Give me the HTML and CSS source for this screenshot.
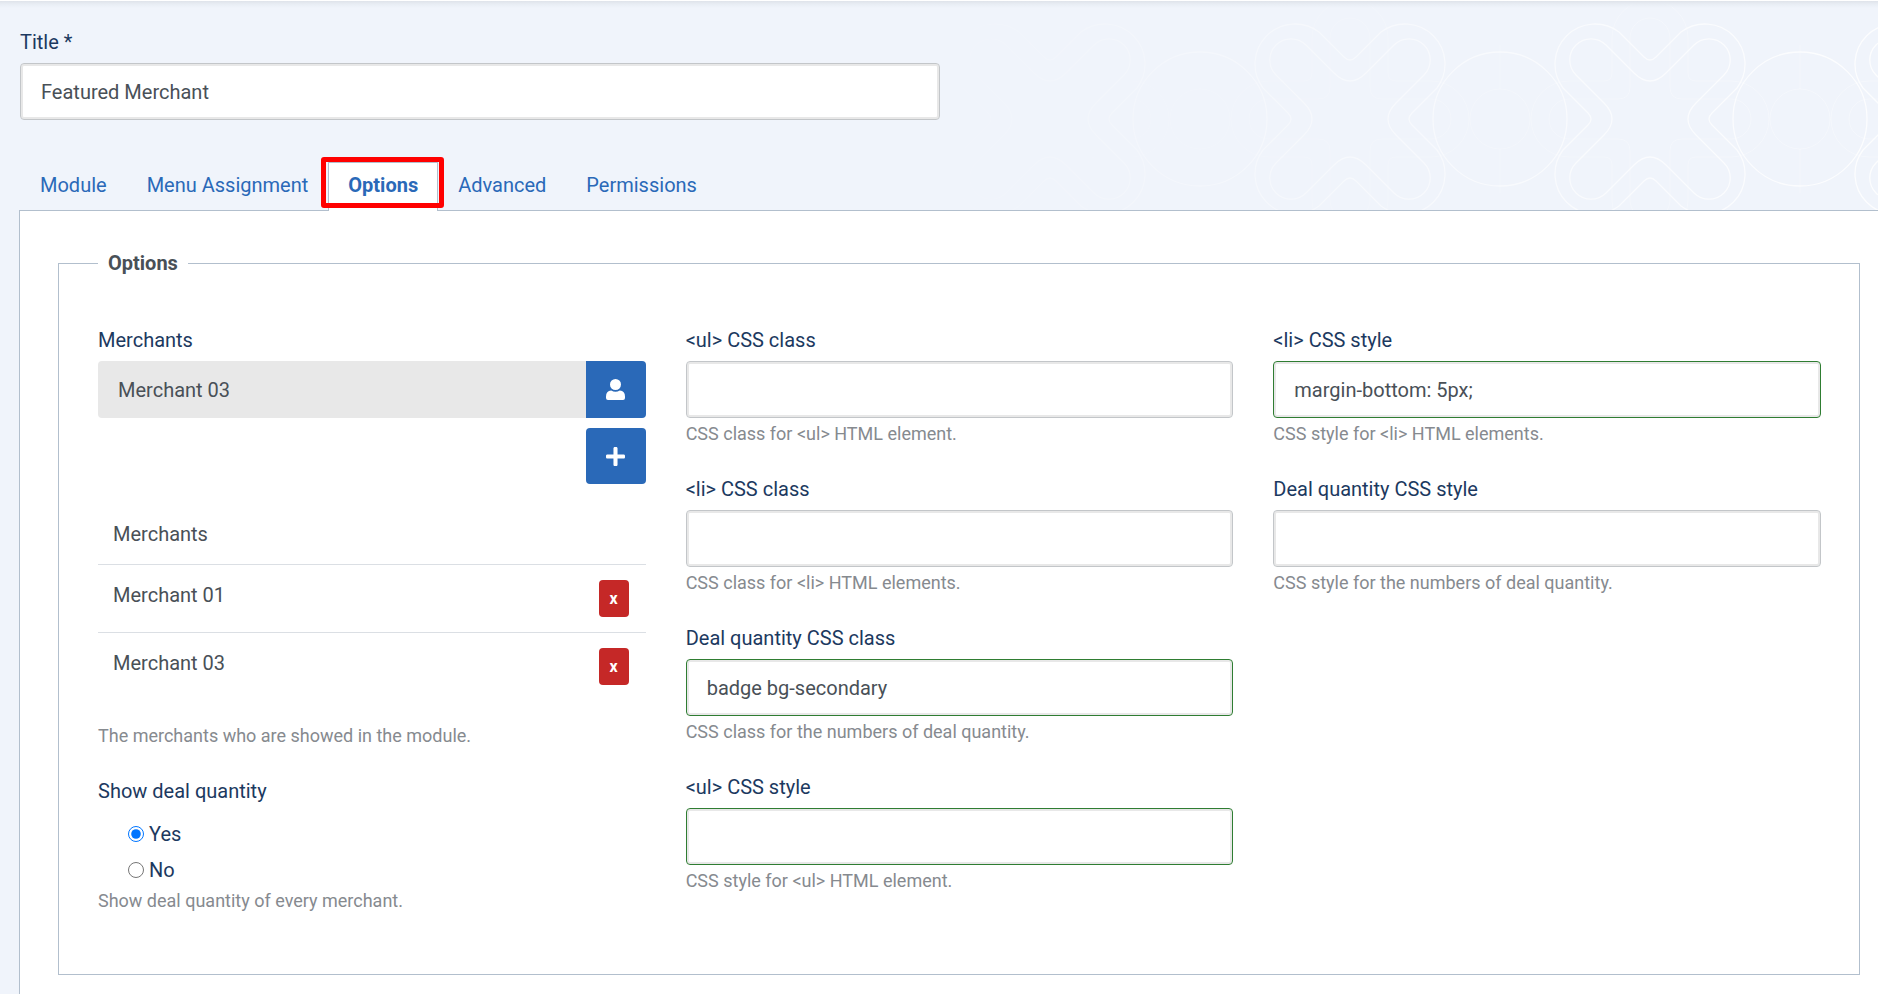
FILE: index.html
```html
<!DOCTYPE html>
<html lang="en">
<head>
<meta charset="utf-8">
<title>Featured Merchant</title>
<link rel="stylesheet" href="styles.css">
</head>
<body>
<svg class="backdrop" aria-hidden="true">
  <defs>
    <linearGradient id="fade" x1="0" x2="1" y1="0" y2="0">
      <stop offset="0" stop-color="#000"/>
      <stop offset=".5" stop-color="#777"/>
      <stop offset="1" stop-color="#ccc"/>
    </linearGradient>
    <mask id="fade-mask"><rect width="100%" height="100%" fill="url(#fade)"/></mask>
    <g id="tile" fill="none" stroke="#fff">
      <g stroke-width="1.3">
        <path d="M-31-87L-6-62Q0-56 6-62L31-87A40 40 0 0 1 87-31L62-6Q56 0 62 6L87 31A40 40 0 0 1 31 87L6 62Q0 56-6 62L-31 87A40 40 0 0 1-87 31L-62 6Q-56 0-62-6L-87-31A40 40 0 0 1-31-87Z"/>
        <path d="M-44-74L-16-46Q0-30 16-46L44-74A21 21 0 0 1 74-44L46-16Q30 0 46 16L74 44A21 21 0 0 1 44 74L16 46Q0 30-16 46L-44 74A21 21 0 0 1-74 44L-46 16Q-30 0-46-16L-74-44A21 21 0 0 1-44-74Z"/>
        <circle cx="150" r="67"/>
      </g>
      <g stroke-opacity=".4">
        <path d="M-38-81A38 38 0 0 1 38-81V-46Q38-38 46-38H81A38 38 0 0 1 81 38H46Q38 38 38 46V81A38 38 0 0 1-38 81V46Q-38 38-46 38H-81A38 38 0 0 1-81-38H-46Q-38-38-38-46Z"/>
        <path d="M-20-81A20 20 0 0 1 20-81V-32Q20-20 32-20H81A20 20 0 0 1 81 20H32Q20 20 20 32V81A20 20 0 0 1-20 81V32Q-20 20-32 20H-81A20 20 0 0 1-81-20H-32Q-20-20-20-32Z"/>
        <circle cx="150" r="30"/>
        <path d="M150-74V-30M150 30V74"/>
      </g>
    </g>
  </defs>
  <g mask="url(#fade-mask)">
    <rect width="100%" height="100%" fill="none"/>
    <use href="#tile" x="150" y="119"/>
    <use href="#tile" x="450" y="119"/>
    <use href="#tile" x="750" y="119"/>
    <use href="#tile" x="1050" y="119"/>
  </g>
</svg>
<form class="page">
  <div class="title-row">
    <label class="label" for="title">Title *</label>
    <input class="input" id="title" type="text" value="Featured Merchant">
  </div>

  <nav class="tabs">
    <a class="tab" href="#module">Module</a>
    <a class="tab" href="#assignment">Menu Assignment</a>
    <a class="tab tab-active" href="#options">Options</a>
    <a class="tab" href="#advanced">Advanced</a>
    <a class="tab" href="#permissions">Permissions</a>
  </nav>

  <section class="panel" id="options">
    <fieldset class="options">
      <legend class="legend">Options</legend>
      <div class="columns">
        <div class="column">
          <div class="field">
            <label class="label" for="merchant">Merchants</label>
            <div class="picker">
              <input class="picker-input" id="merchant" type="text" value="Merchant 03" readonly>
              <button class="button button-joined" type="button" aria-label="Select merchant">
                <svg class="icon icon-user" viewBox="0 0 19 21"><circle cx="9.500" cy="5.500" r="5.500"/><path d="M5.200 11.600Q9.500 14 13.800 11.600Q19 12 19 17.500V19Q19 21 17 21H2Q0 21 0 19V17.500Q0 12 5.200 11.600Z"/></svg>
              </button>
            </div>
            <div class="add-row">
              <button class="button" type="button" aria-label="Add merchant">
                <svg class="icon icon-plus" viewBox="0 0 448 448"><path d="M416 176H272V32c0-17.700-14.300-32-32-32h-32c-17.700 0-32 14.300-32 32v144H32c-17.700 0-32 14.300-32 32v32c0 17.700 14.300 32 32 32h144v144c0 17.700 14.300 32 32 32h32c17.700 0 32-14.300 32-32V272h144c17.700 0 32-14.300 32-32v-32c0-17.700-14.300-32-32-32z"/></svg>
              </button>
            </div>
            <table class="merchants">
              <thead><tr><th colspan="2">Merchants</th></tr></thead>
              <tbody>
                <tr><td>Merchant 01</td><td class="action"><button class="remove" type="button">x</button></td></tr>
                <tr><td>Merchant 03</td><td class="action"><button class="remove" type="button">x</button></td></tr>
              </tbody>
            </table>
            <p class="help">The merchants who are showed in the module.</p>
          </div>
          <div class="field" role="radiogroup" aria-labelledby="show-label">
            <span class="label" id="show-label">Show deal quantity</span>
            <div class="radios">
              <label class="radio"><input type="radio" name="show" checked>Yes</label>
              <label class="radio"><input type="radio" name="show">No</label>
            </div>
            <p class="help">Show deal quantity of every merchant.</p>
          </div>
        </div>

        <div class="column">
          <div class="field">
            <label class="label" for="ul-class">&lt;ul&gt; CSS class</label>
            <input class="input" id="ul-class" type="text">
            <p class="help">CSS class for &lt;ul&gt; HTML element.</p>
          </div>
          <div class="field">
            <label class="label" for="li-class">&lt;li&gt; CSS class</label>
            <input class="input" id="li-class" type="text">
            <p class="help">CSS class for &lt;li&gt; HTML elements.</p>
          </div>
          <div class="field">
            <label class="label" for="deal-class">Deal quantity CSS class</label>
            <input class="input input-valid" id="deal-class" type="text" value="badge bg-secondary">
            <p class="help">CSS class for the numbers of deal quantity.</p>
          </div>
          <div class="field">
            <label class="label" for="ul-style">&lt;ul&gt; CSS style</label>
            <input class="input input-valid" id="ul-style" type="text">
            <p class="help">CSS style for &lt;ul&gt; HTML element.</p>
          </div>
        </div>

        <div class="column">
          <div class="field">
            <label class="label" for="li-style">&lt;li&gt; CSS style</label>
            <input class="input input-valid" id="li-style" type="text" value="margin-bottom: 5px;">
            <p class="help">CSS style for &lt;li&gt; HTML elements.</p>
          </div>
          <div class="field">
            <label class="label" for="deal-style">Deal quantity CSS style</label>
            <input class="input" id="deal-style" type="text">
            <p class="help">CSS style for the numbers of deal quantity.</p>
          </div>
        </div>
      </div>
    </fieldset>
  </section>
</form>
</body>
</html>
```
FILE: styles.css
```css
* {
  box-sizing: border-box;
}

body {
  margin: 0;
  min-height: 100vh;
  overflow: hidden;
  background: #f0f4fb;
  border-top: 1px solid #fff;
  color: #495057;
  font-family: Roboto, "Liberation Sans", sans-serif;
  font-size: 20px;
  line-height: 30px;
}

input,
button {
  font: inherit;
  color: inherit;
}

/* Decorative line pattern behind the header area */
.backdrop {
  position: absolute;
  top: 0;
  right: 0;
  width: 978px;
  height: 210px;
}

.page {
  position: relative;
  display: flex;
  flex-direction: column;
  min-height: calc(100vh - 1px);
  padding: 26px 0 0 19px;
  background: linear-gradient(#dfe3ea, #e8edf4 3px, transparent 7px);
}

.title-row {
  width: 50%;
  padding: 0 9px 0 1px;
  margin-bottom: 42px;
}

.label {
  display: block;
  margin-bottom: 6px;
  color: #1c3960;
}

.input {
  display: block;
  width: 100%;
  height: 57px;
  padding: 0 20px;
  border: 1px solid #c3c6c9;
  border-radius: 4px;
  background: #fff;
  box-shadow: inset 0 0 0 2px #e8e8e8;
}

.input-valid {
  border-color: #2f7d32;
}

.help {
  margin: 3px 0 0;
  color: #868a8f;
  font-size: 18px;
  line-height: 26px;
}

.tabs {
  display: flex;
  padding-left: 1px;
}

.tab {
  padding: 7px 19px 10px;
  border: 1px solid transparent;
  border-bottom: 0;
  color: #2a69b8;
  text-decoration: none;
}

.tab-active {
  position: relative;
  margin-bottom: -1px;
  padding-bottom: 11px;
  background: #fff;
  border-color: #b2bfcd;
  font-weight: 700;
}

/* Red callout around the current tab */
.tab-active::after {
  content: "";
  position: absolute;
  inset: -6px -7px 3px -8px;
  border: 5px solid #f00;
  border-radius: 3px;
}

.panel {
  flex: 1;
  padding: 37px 18px 18px 38px;
  background: #fff;
  border: 1px solid #b2bfcd;
  border-width: 1px 0 0 1px;
}

.options {
  min-width: 0;
  margin: 0;
  padding: 47px 38px 60px 39px;
  border: 1px solid #b2bfcd;
}

.legend {
  padding: 0 10px;
  font-weight: 700;
}

.columns {
  display: grid;
  grid-template-columns: repeat(3, minmax(0, 1fr));
  gap: 40px;
}

.column {
  display: flex;
  flex-direction: column;
  gap: 27px;
}

.picker {
  display: flex;
}

.picker-input {
  flex: 1;
  min-width: 0;
  height: 57px;
  padding: 0 20px;
  border: 0;
  border-radius: 4px 0 0 4px;
  background: #e8e8e8;
}

.button {
  display: flex;
  align-items: center;
  justify-content: center;
  width: 60px;
  height: 56px;
  padding: 0;
  border: 0;
  border-radius: 4px;
  background: #2a69b8;
  color: #fff;
}

.button-joined {
  height: 57px;
  border-radius: 0 4px 4px 0;
}

.add-row {
  display: flex;
  justify-content: flex-end;
  margin: 10px 0 20px;
}

.icon {
  fill: currentColor;
}

.icon-user {
  width: 19px;
  height: 21px;
}

.icon-plus {
  width: 19px;
  height: 19px;
}

.merchants {
  width: 100%;
  margin-bottom: 23px;
  border-collapse: collapse;
}

.merchants th,
.merchants td {
  padding: 15px;
  font-weight: 400;
  text-align: left;
  vertical-align: top;
}

.merchants tr {
  border-bottom: 1px solid #dbdfe4;
}

.merchants tbody tr:last-child {
  border-bottom: 0;
}

.merchants .action {
  display: flex;
  justify-content: flex-end;
  padding-right: 17px;
}

.remove {
  width: 30px;
  height: 37px;
  padding: 0;
  border: 0;
  border-radius: 4px;
  background: #c52827;
  color: #fff;
  font-size: 16px;
  font-weight: 700;
}

.radios {
  display: flex;
  flex-direction: column;
  gap: 6px;
  margin-top: 13px;
  padding-left: 30px;
}

.radio {
  display: flex;
  align-items: center;
  gap: 5px;
  color: #1c3960;
}

.radio input {
  width: 16px;
  height: 16px;
  margin: 0;
}
```
